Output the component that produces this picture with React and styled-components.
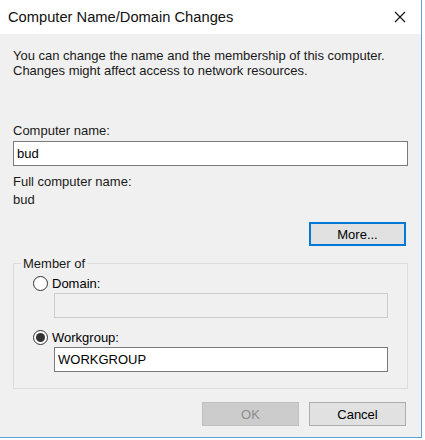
import React from 'react'
import styled, { createGlobalStyle } from 'styled-components'

const Global = createGlobalStyle`
  html, body { margin: 0; padding: 0; background: #ffffff; }
  body { font-family: "Liberation Sans", Arial, sans-serif; font-size: 13px; color: #000; }
`

const Screen = styled.div`
  width: 425px;
  height: 440px;
  background: #ffffff;
  overflow: hidden;
`

const Window = styled.div`
  width: 421px;
  height: 437px;
  border-right: 1px solid #5aa2e4;
  border-bottom: 1px solid #5aa2e4;
  display: flex;
  flex-direction: column;
  background: #f0f0f0;
`

const TitleBar = styled.div`
  height: 34px;
  flex: none;
  background: #ffffff;
  display: flex;
  align-items: center;
  justify-content: space-between;
  padding: 0 15px 0 8px;
`

const Title = styled.span`
  font-size: 14.7px;
  color: #111;
`

const Body = styled.div`
  flex: 1;
  padding: 14px 13px 0 13px;
  display: flex;
  flex-direction: column;
`

const Text = styled.div`
  line-height: 15px;
  color: #1a1a1a;
  margin-top: ${p => p.$mt || 0}px;
`

const Field = styled.div`
  height: ${p => p.$h || 25}px;
  box-sizing: border-box;
  border: 1px solid ${p => (p.$disabled ? '#cccccc' : '#7a7a7a')};
  background: ${p => (p.$disabled ? '#f0f0f0' : '#ffffff')};
  padding: 0 3px;
  display: flex;
  align-items: center;
  margin-top: ${p => p.$mt || 0}px;
  margin-left: ${p => p.$ml || 0}px;
  font-size: 13px;
`

const ButtonRow = styled.div`
  display: flex;
  justify-content: flex-end;
  gap: 10px;
  margin-top: ${p => p.$mt || 0}px;
  padding-right: 2px;
`

const Button = styled.div`
  width: 97px;
  height: 24px;
  box-sizing: border-box;
  display: flex;
  align-items: center;
  justify-content: center;
  background: ${p => (p.$disabled ? '#cccccc' : '#e1e1e1')};
  color: ${p => (p.$disabled ? '#8c8c8c' : '#000')};
  border: ${p => (p.$default ? '2px solid #0078d7' : p.$disabled ? '1px solid #bfbfbf' : '1px solid #adadad')};
  font-size: 13px;
`

const Group = styled.fieldset`
  margin: 10px 0 0 0;
  padding: 5px 19px 13px 19px;
  border: 1px solid #dcdcdc;
  height: 133px;
  box-sizing: border-box;
`

const Legend = styled.legend`
  padding: 0 2px;
  margin-left: -12px;
  color: #1a1a1a;
`

const RadioRow = styled.div`
  display: flex;
  align-items: center;
  gap: 4px;
  margin-top: ${p => p.$mt || 0}px;
`

const RadioDot = styled.span`
  width: 15px;
  height: 15px;
  box-sizing: border-box;
  border-radius: 50%;
  border: 1px solid #333;
  background: #fff;
  display: flex;
  align-items: center;
  justify-content: center;
  &::after {
    content: '';
    width: 9px;
    height: 9px;
    border-radius: 50%;
    background: #333;
    display: ${p => (p.$checked ? 'block' : 'none')};
  }
`

function CloseIcon() {
  return (
    <svg width="12" height="12" viewBox="0 0 12 12">
      <path d="M1 1 L11 11 M11 1 L1 11" stroke="#111" strokeWidth="1.1" />
    </svg>
  )
}

export default function App() {
  return (
    <Screen>
      <Global />
      <Window>
        <TitleBar>
          <Title>Computer Name/Domain Changes</Title>
          <CloseIcon />
        </TitleBar>
        <Body>
          <Text>You can change the name and the membership of this computer.</Text>
          <Text>Changes might affect access to network resources.</Text>
          <Text $mt={45}>Computer name:</Text>
          <Field $mt={3}>bud</Field>
          <Text $mt={8}>Full computer name:</Text>
          <Text $mt={3}>bud</Text>
          <ButtonRow $mt={15}>
            <Button $default>More...</Button>
          </ButtonRow>
          <Group>
            <Legend>Member of</Legend>
            <RadioRow>
              <RadioDot />
              <span>Domain:</span>
            </RadioRow>
            <Field $disabled $ml={21} $mt={2} />
            <RadioRow $mt={12}>
              <RadioDot $checked />
              <span>Workgroup:</span>
            </RadioRow>
            <Field $ml={21} $mt={2}>WORKGROUP</Field>
          </Group>
          <ButtonRow $mt={13}>
            <Button $disabled>OK</Button>
            <Button>Cancel</Button>
          </ButtonRow>
        </Body>
      </Window>
    </Screen>
  )
}
